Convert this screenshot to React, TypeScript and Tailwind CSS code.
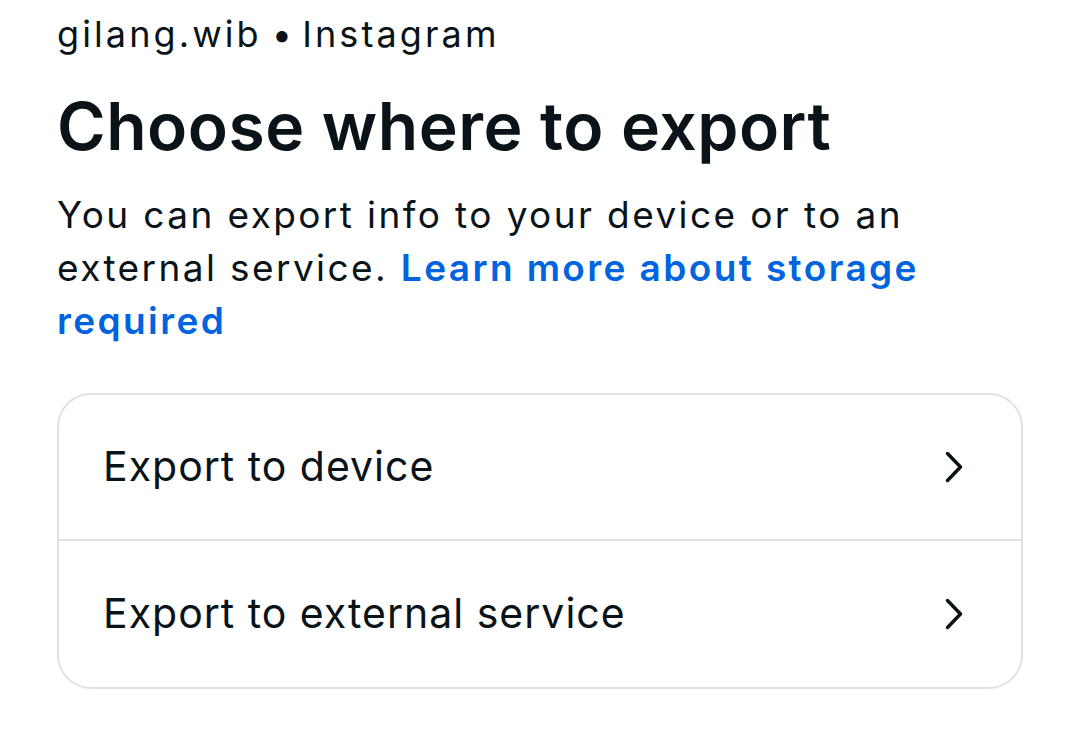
function Chevron() {
  return (
    <svg width="20" height="32" viewBox="0 0 20 32" fill="none" className="shrink-0">
      <path d="M3.5 2.5 L16.5 16 L3.5 29.5" stroke="#0a1317" strokeWidth="3.5" strokeLinecap="round" strokeLinejoin="round" />
    </svg>
  )
}

function Row({ label, last }: { label: string; last?: boolean }) {
  return (
    <div className={`flex items-center justify-between h-[146px] pl-[44px] pr-[57px] ${last ? '' : 'border-b-2 border-[#dfe1e4]'}`}>
      <span className="text-[41px] text-[#0a1317] tracking-[1px]">{label}</span>
      <Chevron />
    </div>
  )
}

export default function App() {
  return (
    <div className="w-[1079px] h-[730px] bg-white overflow-hidden font-['Inter',sans-serif] text-[#0a1317]">
      <div className="pl-[57px] pr-[56px] pt-[4px]">
        <p className="text-[36px] leading-[60px] tracking-[3.1px]">
          gilang.wib<span className="tracking-normal"> • </span>Instagram
        </p>
        <h1 className="mt-[22px] text-[66px] font-semibold leading-[80px] tracking-[0.5px]">Choose where to export</h1>
        <p className="mt-[22px] text-[37px] leading-[53px] tracking-[2.4px]">
          You can export info to your device or to an external service.{' '}
          <span className="font-semibold text-[#0064e0]">Learn more about storage required</span>
        </p>
        <div className="mt-[46px] border-2 border-[#dfe1e4] rounded-[34px] overflow-hidden">
          <Row label="Export to device" />
          <Row label="Export to external service" last />
        </div>
      </div>
    </div>
  )
}
